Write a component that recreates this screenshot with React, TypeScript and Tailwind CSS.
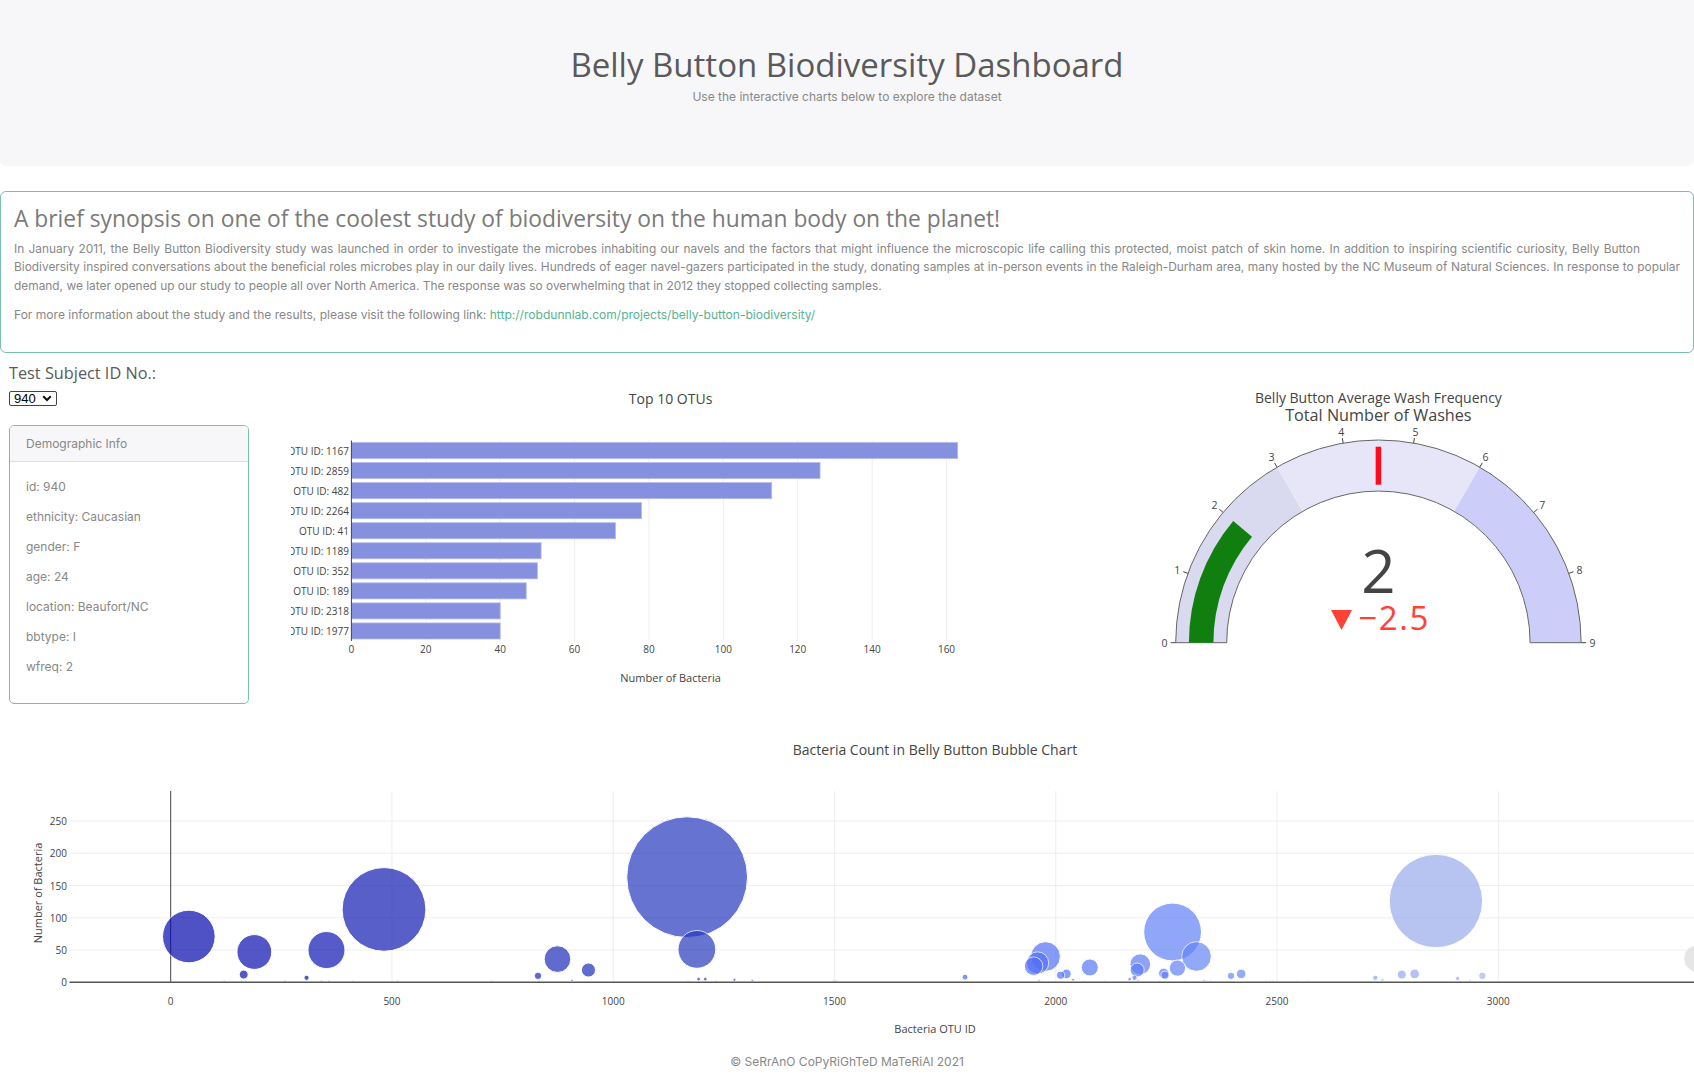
import React from 'react'

const OPEN = "'Open Sans', verdana, arial, sans-serif"

const TOP10: [number, number][] = [
  [1167, 163], [2859, 126], [482, 113], [2264, 78], [41, 71],
  [1189, 51], [352, 50], [189, 47], [2318, 40], [1977, 40],
]

const SAMPLES: [number, number][] = [
  [1167, 163], [2859, 126], [482, 113], [2264, 78], [41, 71], [1189, 51], [352, 50], [189, 47],
  [2318, 40], [1977, 40], [3450, 37], [874, 36], [1959, 30], [2191, 28], [1950, 25], [2077, 23],
  [2275, 22], [944, 19], [2184, 19], [2244, 14], [2024, 13], [2419, 13], [2811, 13], [165, 12],
  [2782, 12], [2247, 11], [2011, 11], [2396, 10], [830, 10], [2964, 10], [1795, 8], [2722, 7],
  [307, 7], [2178, 7], [2908, 6], [1193, 5], [2167, 5], [1208, 5], [2039, 4], [1274, 4],
  [2739, 4], [2737, 3], [1314, 3], [1962, 3], [2186, 3], [2335, 3], [2936, 3], [907, 3],
  [833, 2], [2483, 2], [2475, 2], [2491, 2], [2291, 2], [159, 2], [2571, 2], [2350, 2],
  [2342, 2], [2546, 2], [725, 2], [170, 2], [1505, 2], [513, 2], [259, 2], [1169, 2],
  [258, 2], [1232, 2], [1497, 2], [1498, 2], [1503, 2], [412, 2], [2235, 2], [1960, 2],
  [1968, 2], [121, 2], [2065, 2], [340, 2], [2110, 2], [2188, 2], [357, 2], [342, 2],
]

const DEMO = [
  'id: 940',
  'ethnicity: Caucasian',
  'gender: F',
  'age: 24',
  'location: Beaufort/NC',
  'bbtype: I',
  'wfreq: 2',
]

// plotly.js "Blues"
const BLUES: [number, number[]][] = [
  [0, [5, 10, 172]],
  [0.35, [40, 60, 190]],
  [0.5, [70, 100, 245]],
  [0.6, [90, 120, 245]],
  [0.7, [106, 137, 247]],
  [1, [220, 220, 220]],
]

function blues(t: number) {
  for (let i = 1; i < BLUES.length; i++) {
    const [t1, c1] = BLUES[i]
    const [t0, c0] = BLUES[i - 1]
    if (t <= t1) {
      const f = (t - t0) / (t1 - t0)
      const c = c0.map((v, k) => Math.round(v + (c1[k] - v) * f))
      return `rgb(${c[0]},${c[1]},${c[2]})`
    }
  }
  return 'rgb(220,220,220)'
}

function BarChart() {
  const left = 60.4
  const top = 80.5
  const slot = 20.05
  const k = 3.7194
  return (
    <svg width={760} height={360} className="block shrink-0" fontFamily={OPEN}>
      <text x={379.6} y={38.3} textAnchor="middle" dominantBaseline="central" fontSize={14} fill="#444">
        Top 10 OTUs
      </text>
      {[20, 40, 60, 80, 100, 120, 140, 160].map(v => (
        <line key={v} x1={left + v * k} x2={left + v * k} y1={top} y2={top + slot * 10} stroke="#eee" />
      ))}
      {TOP10.map(([id, v], i) => (
        <g key={id}>
          <rect
            x={left}
            y={top + i * slot + 2}
            width={v * k}
            height={slot - 4}
            fill="#8591de"
            stroke="#b3b9ec"
            strokeWidth={0.8}
          />
          <text x={left - 2.5} y={top + i * slot + slot / 2} textAnchor="end" dominantBaseline="central" fontSize={10} fill="#444">
            OTU ID: {id}
          </text>
        </g>
      ))}
      <line x1={left} x2={left} y1={top} y2={top + slot * 10} stroke="#444" />
      {[0, 20, 40, 60, 80, 100, 120, 140, 160].map(v => (
        <text key={v} x={left + v * k} y={289.3} textAnchor="middle" dominantBaseline="central" fontSize={10} fill="#444">
          {v}
        </text>
      ))}
      <text x={379.6} y={317.7} textAnchor="middle" dominantBaseline="central" fontSize={11} fill="#444">
        Number of Bacteria
      </text>
    </svg>
  )
}

const GX = 327.4
const GY = 282.7
const RO = 202.7
const RI = 151.7

function pt(r: number, v: number) {
  const a = ((180 - v * 20) * Math.PI) / 180
  return [GX + r * Math.cos(a), GY - r * Math.sin(a)]
}

function sector(a: number, b: number, ro: number, ri: number) {
  const [x1, y1] = pt(ro, a)
  const [x2, y2] = pt(ro, b)
  const [x3, y3] = pt(ri, b)
  const [x4, y4] = pt(ri, a)
  return `M${x1} ${y1} A${ro} ${ro} 0 0 1 ${x2} ${y2} L${x3} ${y3} A${ri} ${ri} 0 0 0 ${x4} ${y4} Z`
}

function Gauge() {
  const [tx1, ty1] = pt(158, 4.5)
  const [tx2, ty2] = pt(196, 4.5)
  return (
    <svg width={643} height={360} className="block shrink-0" fontFamily={OPEN}>
      <text x={GX} y={37.5} textAnchor="middle" dominantBaseline="central" fontSize={14} fill="#444">
        Belly Button Average Wash Frequency
      </text>
      <text x={GX} y={55} textAnchor="middle" dominantBaseline="central" fontSize={16.2} fill="#444">
        Total Number of Washes
      </text>
      <path d={sector(0, 3, RO, RI)} fill="#d9d9ef" />
      <path d={sector(3, 6, RO, RI)} fill="#e6e6f8" />
      <path d={sector(6, 9, RO, RI)} fill="#cdcdfa" />
      <path d={sector(0, 9, RO, RI)} fill="none" stroke="#666" strokeWidth={1} />
      <path d={sector(0, 2, 189.5, 165)} fill="#107f10" />
      <line x1={tx1} y1={ty1} x2={tx2} y2={ty2} stroke="#ff0a1e" strokeWidth={5.5} />
      {[0, 1, 2, 3, 4, 5, 6, 7, 8, 9].map(v => {
        const [a1, b1] = pt(RO, v)
        const [a2, b2] = pt(RO + 5, v)
        const [lx, ly] = pt(214, v)
        return (
          <g key={v}>
            <line x1={a1} y1={b1} x2={a2} y2={b2} stroke="#444" />
            <text x={lx} y={ly} textAnchor="middle" dominantBaseline="central" fontSize={10.5} fill="#444">
              {v}
            </text>
          </g>
        )
      })}
      <text x={GX} y={233} textAnchor="middle" fontSize={60} fill="#444">
        2
      </text>
      <polygon points="280,250 301,250 290.5,270" fill="#ff4136" />
      <text x={307.5} y={270} fontSize={33} letterSpacing={1.5} fill="#ff4136">
        −2.5
      </text>
    </svg>
  )
}

function BubbleChart() {
  const x0 = 170.7
  const kx = 0.44253
  const y0 = 262.3
  const ky = 0.645
  const left = 69.5
  const top = 71
  return (
    <svg width={1694} height={325} className="block" fontFamily={OPEN}>
      <text x={935} y={29} textAnchor="middle" dominantBaseline="central" fontSize={14} fill="#444">
        Bacteria Count in Belly Button Bubble Chart
      </text>
      {[50, 100, 150, 200, 250].map(v => (
        <line key={v} x1={left} x2={1694} y1={y0 - v * ky} y2={y0 - v * ky} stroke="#eee" />
      ))}
      {[500, 1000, 1500, 2000, 2500, 3000].map(v => (
        <line key={v} x1={x0 + v * kx} x2={x0 + v * kx} y1={top} y2={y0} stroke="#eee" />
      ))}
      <line x1={x0} x2={x0} y1={top} y2={y0} stroke="#444" />
      {SAMPLES.map(([id, v], i) => (
        <circle
          key={i}
          cx={x0 + id * kx}
          cy={y0 - v * ky}
          r={(v * 0.741) / 2}
          fill={blues((id - 41) / (3450 - 41))}
          stroke="#fff"
          strokeWidth={1}
          opacity={0.7}
        />
      ))}
      <line x1={left} x2={1694} y1={y0} y2={y0} stroke="#555" strokeWidth={1.4} />
      {[0, 50, 100, 150, 200, 250].map(v => (
        <text key={v} x={67} y={y0 - v * ky} textAnchor="end" dominantBaseline="central" fontSize={10} fill="#444">
          {v}
        </text>
      ))}
      {[0, 500, 1000, 1500, 2000, 2500, 3000].map(v => (
        <text key={v} x={x0 + v * kx} y={280.7} textAnchor="middle" dominantBaseline="central" fontSize={10} fill="#444">
          {v}
        </text>
      ))}
      <text x={935} y={308.5} textAnchor="middle" dominantBaseline="central" fontSize={11} fill="#444">
        Bacteria OTU ID
      </text>
      <text
        x={37}
        y={173}
        textAnchor="middle"
        dominantBaseline="central"
        fontSize={11}
        fill="#444"
        transform="rotate(-90 37 173)"
      >
        Number of Bacteria
      </text>
    </svg>
  )
}

export default function App() {
  return (
    <div className="w-[1694px] min-h-[1089px] overflow-hidden bg-white font-[family-name:Inter,sans-serif] text-[#888]">
      <header className="flex h-[166px] flex-col items-center rounded-b-[6px] bg-[#f7f7f9] pt-[46px]">
        <h1 className="font-[family-name:'Open_Sans',sans-serif] text-[33px] leading-[38px] text-[#5a5a5a]">
          Belly Button Biodiversity Dashboard
        </h1>
        <p className="mt-[4px] text-[12px] leading-[18px] text-[#888]">
          Use the interactive charts below to explore the dataset
        </p>
      </header>

      <section className="mt-[25px] h-[162px] rounded-[6px] border border-[#78c2ad] px-[13px] pt-[13px]">
        <h3 className="font-[family-name:'Open_Sans',sans-serif] text-[22.8px] leading-[27px] text-[#7a7a7a]">
          A brief synopsis on one of the coolest study of biodiversity on the human body on the planet!
        </h3>
        <div className="mt-[8px] text-[11.9px] leading-[18.4px]">
          <div className="w-[1626px] [text-align-last:justify]">
            In January 2011, the Belly Button Biodiversity study was launched in order to investigate the microbes inhabiting our navels and the factors that might influence the microscopic life calling this protected, moist patch of skin home. In addition to inspiring scientific curiosity, Belly Button
          </div>
          <div className="w-[1666px] [text-align-last:justify]">
            Biodiversity inspired conversations about the beneficial roles microbes play in our daily lives. Hundreds of eager navel-gazers participated in the study, donating samples at in-person events in the Raleigh-Durham area, many hosted by the NC Museum of Natural Sciences. In response to popular
          </div>
          <div className="whitespace-nowrap">
            demand, we later opened up our study to people all over North America. The response was so overwhelming that in 2012 they stopped collecting samples.
          </div>
        </div>
        <p className="mt-[11.2px] whitespace-nowrap text-[12.05px] leading-[18.4px]">
          For more information about the study and the results, please visit the following link:{' '}
          <a className="text-[#56b393]" href="#">
            http://robdunnlab.com/projects/belly-button-biodiversity/
          </a>
        </p>
      </section>

      <div className="mt-[7px] flex h-[360px]">
        <div className="w-[291px] shrink-0 pl-[9px]">
          <h5 className="mt-[3px] font-[family-name:'Open_Sans',sans-serif] text-[16.3px] leading-[20px] text-[#5a5a5a]">
            Test Subject ID No.:
          </h5>
          <div className="relative mt-[8px] h-[15px] w-[48px]">
            <select
              defaultValue="940"
              className="block h-[15px] w-[48px] appearance-none rounded-[2px] border border-[#444] bg-white py-0 pl-[4px] font-[family-name:'Liberation_Sans',sans-serif] text-[13px] leading-[13px] text-black"
            >
              <option value="940">940</option>
              <option value="941">941</option>
              <option value="943">943</option>
            </select>
            <svg className="pointer-events-none absolute right-[5px] top-[4px]" width="10" height="7" viewBox="0 0 10 7">
              <path d="M1.2 1.2 L5 5 L8.8 1.2" fill="none" stroke="#111" strokeWidth="2" />
            </svg>
          </div>
          <div className="mt-[19px] h-[279px] w-[240px] overflow-hidden rounded-[5px] border border-[#78c2ad]">
            <div className="flex h-[36px] items-center border-b border-[#dedede] bg-[#f7f7f9] pl-[16px] text-[12px]">
              Demographic Info
            </div>
            <div className="pl-[16px] pt-[10px] text-[12px]">
              {DEMO.map(d => (
                <div key={d} className="leading-[30px]">
                  {d}
                </div>
              ))}
            </div>
          </div>
        </div>
        <BarChart />
        <Gauge />
      </div>

      <BubbleChart />

      <footer className="flex h-[34px] items-center justify-center text-[12px] text-[#888]">
        © SeRrAnO CoPyRiGhTeD MaTeRiAl 2021
      </footer>
    </div>
  )
}
